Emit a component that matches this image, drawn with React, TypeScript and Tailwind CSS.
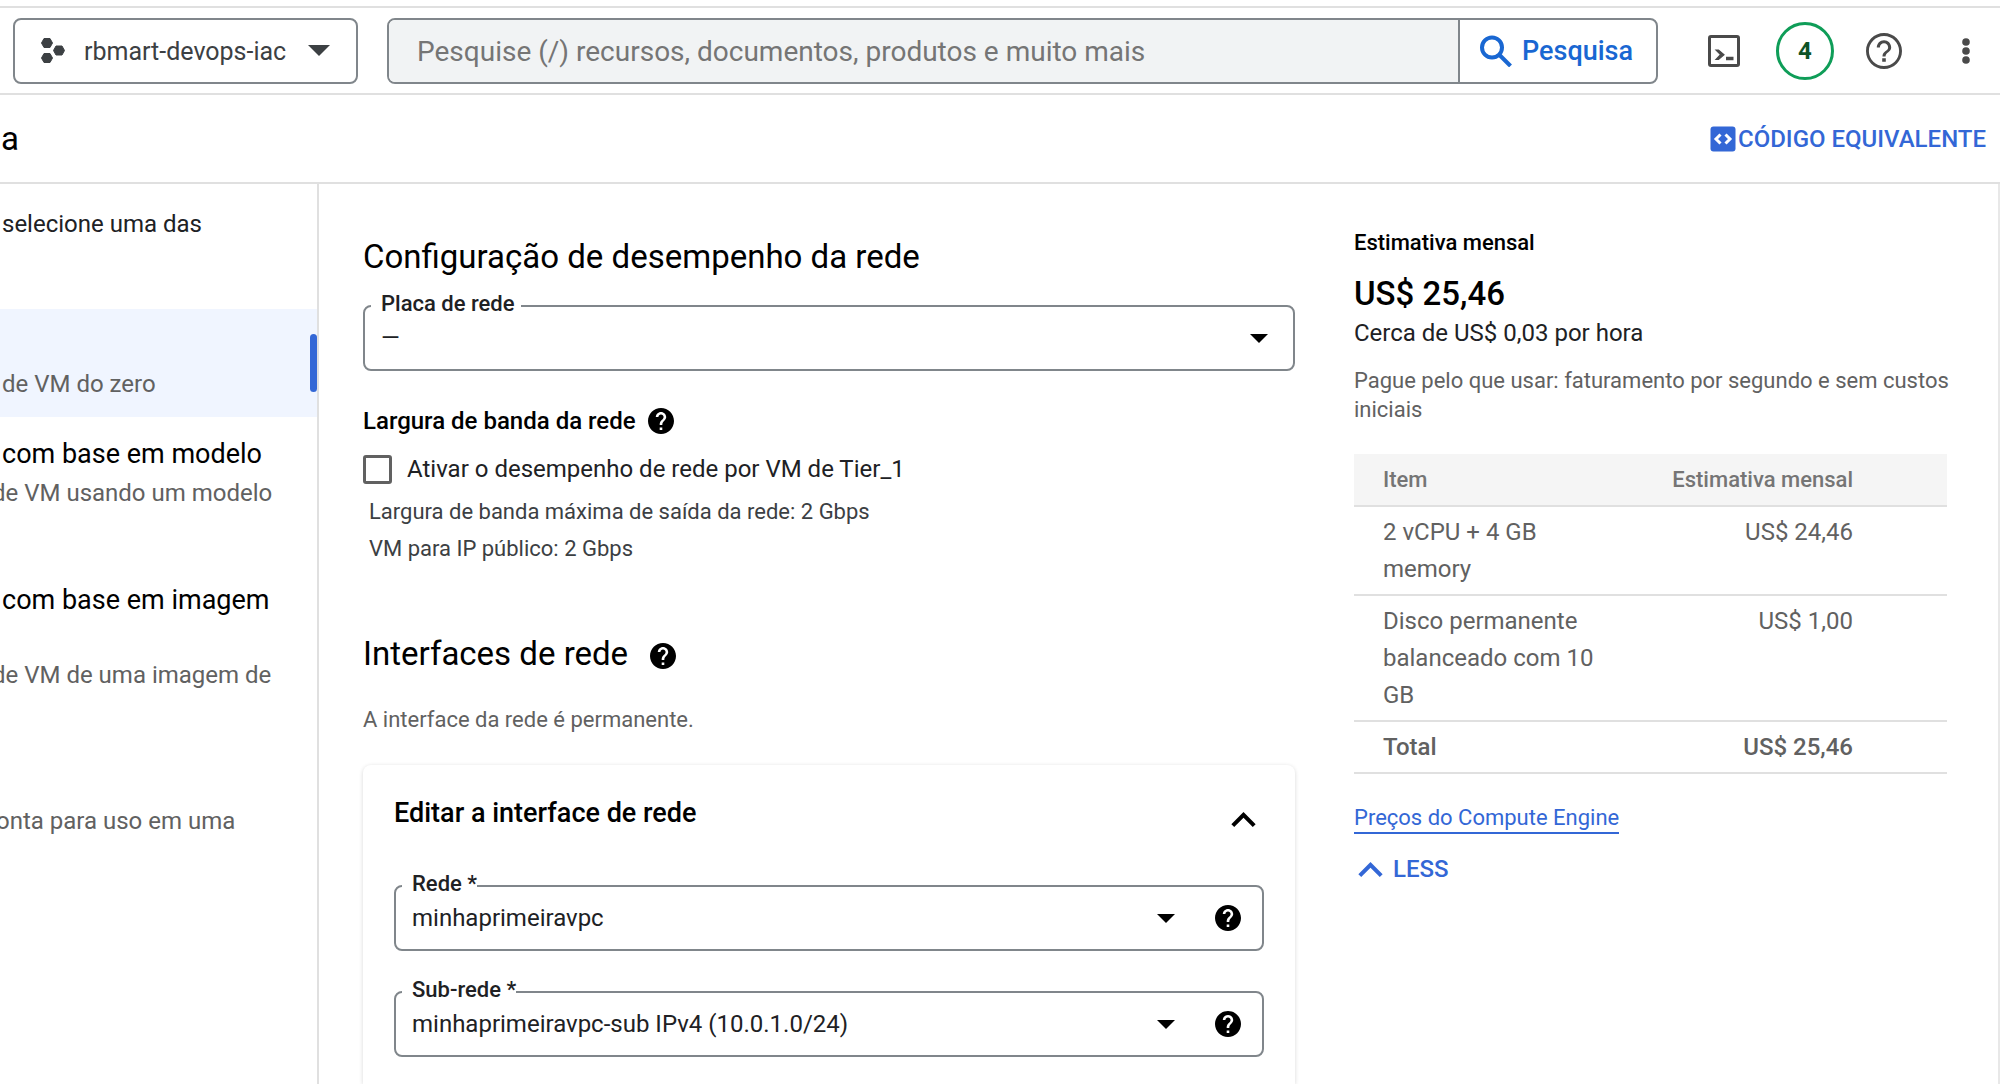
import type { ReactNode } from "react";

const HelpSolid = () => (
  <svg viewBox="2 2 20 20" className="size-[26px] shrink-0" fill="currentColor" aria-hidden="true">
    <path d="M12 2C6.48 2 2 6.48 2 12s4.48 10 10 10 10-4.48 10-10S17.52 2 12 2zm1 17h-2v-2h2v2zm2.07-7.75l-.9.92C13.45 12.9 13 13.5 13 15h-2v-.5c0-1.1.45-2.1 1.17-2.83l1.24-1.26c.37-.36.59-.86.59-1.41 0-1.1-.9-2-2-2s-2 .9-2 2H8c0-2.21 1.79-4 4-4s4 1.79 4 4c0 .88-.36 1.68-.93 2.25z" />
  </svg>
);

const HelpOutline = () => (
  <svg viewBox="2 2 20 20" className="size-[36px]" fill="currentColor" aria-hidden="true">
    <path d="M11 18h2v-2h-2v2zm1-16C6.48 2 2 6.48 2 12s4.48 10 10 10 10-4.48 10-10S17.52 2 12 2zm0 18.4c-4.64 0-8.4-3.76-8.4-8.4s3.76-8.4 8.4-8.4 8.4 3.76 8.4 8.4-3.76 8.4-8.4 8.4zm0-14.4c-2.21 0-4 1.79-4 4h1.7c0-1.27 1.03-2.3 2.3-2.3s2.3 1.03 2.3 2.3c0 2.1-3.15 1.9-3.15 5h1.7c0-2.25 3.15-2.5 3.15-5 0-2.21-1.79-4-4-4z" />
  </svg>
);

const ChevronUp = () => (
  <svg viewBox="6 8 12 7.41" className="h-[15px] w-[25px]" fill="currentColor" aria-hidden="true">
    <path d="M12 8l-6 6 1.41 1.41L12 10.83l4.59 4.58L18 14z" />
  </svg>
);

const ProjectIcon = () => (
  <svg viewBox="0 0 26 28" className="h-[28px] w-[26px]" fill="#3c4043" stroke="#3c4043" strokeLinejoin="round" aria-hidden="true">
    <path d="M4 1.500h6l2.500 4.500-2.500 4.500H4L1.500 6z" />
    <path d="M4 16.500h6l2.500 4.500-2.500 4.500H4L1.500 21z" />
    <path d="M16 9h6l2.500 4.500L22 18h-6l-2.500-4.500z" />
  </svg>
);

const SearchIcon = () => (
  <svg viewBox="0 0 32 32" className="size-[32px]" fill="none" stroke="currentColor" strokeWidth="4" aria-hidden="true">
    <circle cx="12" cy="12.500" r="10" />
    <path d="M19.500 20l11 11" />
  </svg>
);

const TerminalIcon = () => (
  <svg viewBox="0 0 34 34" className="size-[34px]" fill="none" stroke="currentColor" aria-hidden="true">
    <rect x="2.500" y="2.500" width="29" height="29" rx="1.500" strokeWidth="3" />
    <path d="M9 16h2.500l5.500 4.700-5.500 4.800H9l4.500-4.800z" strokeWidth="1.200" fill="currentColor" />
    <path d="M19 24.500h7.500" strokeWidth="3.500" />
  </svg>
);

const CodeIcon = () => (
  <svg viewBox="0 0 26 26" className="size-[26px]" aria-hidden="true">
    <rect x="0.500" y="0.500" width="25" height="25" rx="3" fill="#3367d6" />
    <path d="M10.500 8.500L6 13l4.500 4.500M15.500 8.500L20 13l-4.500 4.500" fill="none" stroke="#fff" strokeWidth="3" />
  </svg>
);

const FieldArrow = () => (
  <svg viewBox="0 0 18 9" className="h-[9px] w-[18px]" fill="currentColor" aria-hidden="true">
    <path d="M0 0h18L9 9z" />
  </svg>
);

function SelectField({ id, label, value, help = false }: { id: string; label: string; value: string; help?: boolean }) {
  return (
    <div className="relative">
      <select
        id={id}
        defaultValue={value}
        className="h-[66px] w-full appearance-none rounded-lg border-2 border-[#80868b] bg-white pr-28 pl-4 text-[24px] leading-8 text-[#202124]"
      >
        <option>{value}</option>
      </select>
      <label
        htmlFor={id}
        className={`absolute -top-[15px] left-2 bg-white pl-[10px] text-[22px] leading-7 font-medium text-[#202124] ${help ? "pr-0" : "pr-1.5"}`}
      >
        {label}
      </label>
      <div className={`pointer-events-none absolute inset-y-0 flex items-center gap-10 text-black ${help ? "right-[23px]" : "right-[27px]"}`}>
        <FieldArrow />
        {help && <HelpSolid />}
      </div>
    </div>
  );
}

function SideItem({ title, children }: { title?: string; children: ReactNode }) {
  return (
    <li className="pt-[19px] pb-4">
      <p className="min-h-9 pl-0.5 text-[27px] text-black">{title}</p>
      <div className="mt-[3px] text-[#616161]">{children}</div>
    </li>
  );
}

const rows: [string, string][] = [
  ["2 vCPU + 4 GB memory", "US$ 24,46"],
  ["Disco permanente balanceado com 10 GB", "US$ 1,00"],
];

export default function App() {
  return (
    <div className="flex min-h-screen flex-col bg-white pt-[6px] font-['Roboto',sans-serif] text-[24px] text-black">
      <header className="flex h-[89px] shrink-0 items-center border-y-2 border-[#e0e0e0] pr-[30px] pl-[13px]">
        <button className="flex h-[66px] w-[345px] shrink-0 items-center rounded-lg border-2 border-[#80868b] pl-[25px] text-[25px] whitespace-nowrap text-[#3c4043]">
          <ProjectIcon />
          <span className="ml-[18px] pt-0.5">rbmart-devops-iac</span>
          <svg viewBox="0 0 22 11" className="ml-[22px] h-[11px] w-[22px]" fill="#3c4043" aria-hidden="true">
            <path d="M0 0h22L11 11z" />
          </svg>
        </button>
        <form className="ml-[29px] flex h-[66px] min-w-0 flex-1 overflow-hidden rounded-lg border-2 border-[#80868b]">
          <input
            type="search"
            aria-label="Pesquisar"
            placeholder="Pesquise (/) recursos, documentos, produtos e muito mais"
            className="min-w-0 flex-1 bg-[#f1f3f4] pt-0.5 pl-7 text-[28px] placeholder:text-[#757575]"
          />
          <button type="button" className="flex w-[198px] items-center gap-2.5 border-l-2 border-[#80868b] pl-5 text-[27px] font-medium text-[#1967d2]">
            <SearchIcon />
            <span className="pt-0.5">Pesquisa</span>
          </button>
        </form>
        <div className="ml-[49px] flex shrink-0 items-center text-[#4a4a4a]">
          <button aria-label="Terminal">
            <TerminalIcon />
          </button>
          <button className="ml-[35px] size-[58px] rounded-full border-[3px] border-[#0f9d58] text-[24px] font-bold text-[#0d5226]">4</button>
          <button aria-label="Ajuda" className="ml-8">
            <HelpOutline />
          </button>
          <button aria-label="Mais opções" className="ml-[60px]">
            <svg viewBox="0 0 8 26" className="h-[26px] w-[8px]" fill="currentColor" aria-hidden="true">
              <circle cx="4" cy="4" r="3.800" />
              <circle cx="4" cy="13" r="3.800" />
              <circle cx="4" cy="22" r="3.800" />
            </svg>
          </button>
        </div>
      </header>

      <div className="flex h-[89px] shrink-0 items-center justify-between border-b-2 border-[#e0e0e0] pr-3.5 pl-px">
        <h1 className="text-[33px]">a</h1>
        <button className="flex items-center gap-0.5 font-medium text-[#3367d6]">
          <CodeIcon />
          CÓDIGO EQUIVALENTE
        </button>
      </div>

      <div className="flex flex-1">
        <nav className="w-[319px] shrink-0 overflow-hidden border-r-2 border-[#e0e0e0] pt-[22px] leading-9 whitespace-nowrap">
          <p className="pl-0.5 text-[#202124]">selecione uma das</p>
          <ul className="mt-[67px]">
            <li className="flex items-center justify-between bg-[#f0f5ff] text-[#616161]">
              <p className="pt-[57px] pb-[15px] pl-0.5">de VM do zero</p>
              <span className="h-[58px] w-[7px] rounded bg-[#3367d6]" />
            </li>
            <SideItem title="com base em modelo">
              <p className="-ml-2 h-[72px]">de VM usando um modelo</p>
            </SideItem>
            <li className="pt-[19px] pb-4">
              <p className="h-[72px] pl-0.5 text-[27px]">com base em imagem</p>
              <p className="mt-[3px] -ml-2 h-[72px] text-[#616161]">de VM de uma imagem de</p>
            </li>
            <SideItem>
              <p className="-ml-1">onta para uso em uma</p>
            </SideItem>
          </ul>
        </nav>

        <main className="flex min-w-0 flex-1 flex-col pt-[53px] pr-[59px] pl-11">
          <h2 className="text-[33px] leading-10">Configuração de desempenho da rede</h2>
          <div className="mt-7">
            <SelectField id="placa" label="Placa de rede" value="—" />
          </div>
          <div className="mt-[34px] flex items-center gap-3 leading-8">
            <h3 className="font-medium">Largura de banda da rede</h3>
            <button aria-label="Ajuda sobre largura de banda">
              <HelpSolid />
            </button>
          </div>
          <label className="mt-3.5 flex items-center gap-[15px] leading-9 text-[#202124]">
            <input type="checkbox" className="size-[29px] appearance-none rounded-[3px] border-[3px] border-[#616161] bg-white" />
            Ativar o desempenho de rede por VM de Tier_1
          </label>
          <div className="mt-1.5 pl-1.5 text-[22px] leading-[37px] text-[#3c4043]">
            <p>Largura de banda máxima de saída da rede: 2 Gbps</p>
            <p>VM para IP público: 2 Gbps</p>
          </div>
          <div className="mt-[67px] flex items-center gap-[22px]">
            <h2 className="text-[33px] leading-10">Interfaces de rede</h2>
            <button aria-label="Ajuda sobre interfaces de rede" className="pt-1">
              <HelpSolid />
            </button>
          </div>
          <p className="mt-8 text-[22px] leading-7 text-[#616161]">A interface da rede é permanente.</p>
          <section className="mt-[31px] flex-1 rounded-t-lg px-[31px] pt-[30px] shadow-[0_1px_4px_rgba(0,0,0,0.16)]">
            <div className="flex items-end justify-between">
              <h3 className="text-[27px] leading-9 font-medium">Editar a interface de rede</h3>
              <button aria-label="Recolher" className="px-2 pb-1">
                <ChevronUp />
              </button>
            </div>
            <div className="mt-[54px] flex flex-col gap-10">
              <SelectField id="rede" label="Rede *" value="minhaprimeiravpc" help />
              <SelectField id="subrede" label="Sub-rede *" value="minhaprimeiravpc-sub IPv4 (10.0.1.0/24)" help />
            </div>
          </section>
        </main>

        <aside className="w-[646px] shrink-0 border-r-2 border-[#e8e8e8] pt-[45px] pr-[51px]">
          <h2 className="text-[22px] leading-7 font-medium">Estimativa mensal</h2>
          <p className="mt-[17px] text-[33px] leading-10 font-medium">US$ 25,46</p>
          <p className="mt-[3px] leading-8 text-[#202124]">Cerca de US$ 0,03 por hora</p>
          <p className="mt-[17px] -mr-4 text-[22px] leading-[29px] text-[#616161]">
            Pague pelo que usar: faturamento por segundo e sem custos iniciais
          </p>
          <table className="mt-[30px] w-full text-left leading-[37px] text-[#616161]">
            <thead>
              <tr className="border-b-2 border-[#e0e0e0] bg-[#f5f5f5] text-[22px] text-[#757575]">
                <th className="w-[255px] py-[7px] pl-[29px] font-medium">Item</th>
                <th className="py-[7px] pr-[94px] text-right font-medium">Estimativa mensal</th>
              </tr>
            </thead>
            <tbody>
              {rows.map(([item, price]) => (
                <tr key={item} className="border-b-2 border-[#e0e0e0] align-top">
                  <td className="pt-[7px] pb-1.5 pl-[29px]">{item}</td>
                  <td className="pt-[7px] pr-[94px] pb-1.5 text-right">{price}</td>
                </tr>
              ))}
              <tr className="border-b-2 border-[#e0e0e0] font-medium">
                <td className="pt-[7px] pb-1.5 pl-[29px]">Total</td>
                <td className="pt-[7px] pr-[94px] pb-1.5 text-right">US$ 25,46</td>
              </tr>
            </tbody>
          </table>
          <a href="#precos" className="mt-[30px] block w-fit border-b-2 border-[#3367d6] text-[22px] leading-7 text-[#3367d6]">
            Preços do Compute Engine
          </a>
          <button className="mt-[19px] flex items-center gap-[10px] pl-1 leading-8 font-medium text-[#3367d6]">
            <ChevronUp />
            LESS
          </button>
        </aside>
      </div>
    </div>
  );
}
